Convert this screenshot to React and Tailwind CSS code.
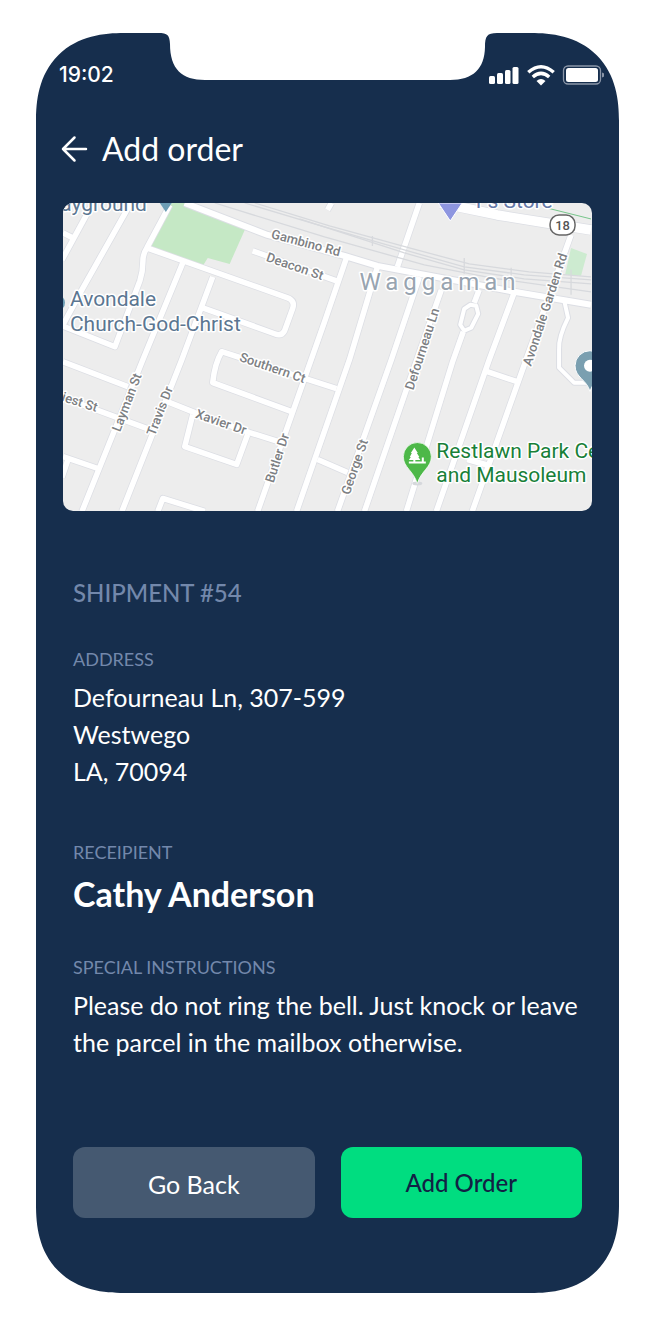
const roads = [
  'M93 203L62 260', 'M63 233L73 238', 'M131 203L83 288L63 325',
  'M170 205L147 248Q143 254 143 262Q143 272 140 281L115 347L62 326',
  'M147 248L288 298Q296 301 293 309L285 331Q282 337 275 334L203 308',
  'M183 263L143 360L82 512', 'M213 277L182 360L122 512',
  'M253 251L337 281', 'M347 258L325 322L258 512', 'M378 267L350 360L297 512',
  'M420 277L392 360L338 512', 'M442 290L407 390L365 512',
  'M480 290L475 303M464 332L453 363L407 512', 'M515 293L490 360L437 512',
  'M572 235L528 357L473 512', 'M488 372L518 382', 'M468 460L490 466',
  'M420 203L398 267', 'M332 203L328 210', 'M63 362L128 387', 'M63 398L150 430',
  'M165 401L195 413L250 433L282 443', 'M193 415L185 447L237 465L248 435',
  'M337 389L222 352Q215 364 213 383L292 412', 'M63 457L98 469', 'M68 460L62 478',
  'M158 512L163 499L205 512', 'M318 460L348 473',
];
const narrowRoads = [
  'M471 305L477 306L479 314L472 328L465 331L461 325L465 309Z',
  'M565 300L569 318Q559 338 560 350L560 368L575 383H592',
];
const rails = [
  'M245 203L325 227L405 250L465 267L525 275L592 280',
  'M255 203L330 226L410 248L470 264L530 272L592 277',
  'M215 203L325 237L425 265L492 278L592 292',
  'M300 219L405 253L465 270L525 279L592 284',
  'M373 236V246M465 258V274M512 268V280M572 270V295',
];

function RoadLabel({ x, y, angle, children }) {
  return (
    <text x={x} y={y} transform={`rotate(${angle} ${x} ${y})`} fontSize="13" fontWeight="500" fill="#7d8083" stroke="#fff" strokeWidth="3" paintOrder="stroke">
      {children}
    </text>
  );
}

function DeliveryMap() {
  return (
    <svg
      role="img"
      aria-label="Map of Waggaman"
      viewBox="63 203 530 309"
      preserveAspectRatio="xMidYMid slice"
      className="block w-full rounded-[10px] bg-[#ededed]"
      fontFamily="Roboto, sans-serif"
      strokeLinejoin="round"
    >
      <path d="M172 203H187L246 228L230 264L208 258L203 266L151 247Z" fill="#c5e8c5" />
      <path d="M572 248L588 254L582 276L566 275Z" fill="#cdebd0" />
      <g fill="none">
        <g stroke="#dcdee4" strokeWidth="7">{roads.map((d) => <path key={d} d={d} />)}</g>
        <g stroke="#dcdee4" strokeWidth="6">{narrowRoads.map((d) => <path key={d} d={d} />)}</g>
        <path d="M185 203L268 235L345 256L378 266L458 281L515 292L592 305" stroke="#dcdee4" strokeWidth="8" />
        <path d="M441 203L465 208L498 215L548 223L592 230" stroke="#dcdee4" strokeWidth="11" />
        <g stroke="#fff" strokeWidth="5.500">{roads.map((d) => <path key={d} d={d} />)}</g>
        <g stroke="#fff" strokeWidth="4">{narrowRoads.map((d) => <path key={d} d={d} />)}</g>
        <path d="M185 203L268 235L345 256L378 266L458 281L515 292L592 305" stroke="#fff" strokeWidth="6" />
        <path d="M441 203L465 208L498 215L548 223L592 230" stroke="#fff" strokeWidth="9.500" />
        <g stroke="#d7d9dd" strokeWidth="1.300">{rails.map((d) => <path key={d} d={d} />)}</g>
        <path d="M548 208L592 219" stroke="#76c58a" />
      </g>

      <RoadLabel x={271} y={238} angle={15}>Gambino Rd</RoadLabel>
      <RoadLabel x={266} y={261} angle={19}>Deacon St</RoadLabel>
      <RoadLabel x={239} y={361} angle={19}>Southern Ct</RoadLabel>
      <RoadLabel x={195} y={418} angle={19}>Xavier Dr</RoadLabel>
      <RoadLabel x={61} y={401} angle={18}>iest St</RoadLabel>
      <RoadLabel x={120} y={433} angle={-69}>Layman St</RoadLabel>
      <RoadLabel x={155} y={437} angle={-69}>Travis Dr</RoadLabel>
      <RoadLabel x={274} y={484} angle={-72}>Butler Dr</RoadLabel>
      <RoadLabel x={350} y={496} angle={-71}>George St</RoadLabel>
      <RoadLabel x={414} y={391} angle={-72}>Defourneau Ln</RoadLabel>
      <RoadLabel x={532} y={367} angle={-72}>Avondale Garden Rd</RoadLabel>

      <g stroke="#fff" strokeWidth="3" paintOrder="stroke">
        <text x="360" y="290" fontSize="24" letterSpacing="5" fill="#98a4b0">Waggaman</text>
        <g fontSize="21" fill="#5b7691">
          <text x="147" y="211" textAnchor="end">Playground</text>
          <text x="70" y="306">Avondale</text>
          <text x="70" y="331">Church-God-Christ</text>
          <text x="473" y="208" fill="#6478a8">T's Store</text>
        </g>
        <g fontSize="21" fill="#188038">
          <text x="437" y="458">Restlawn Park Cemetery</text>
          <text x="437" y="483">and Mausoleum</text>
        </g>
      </g>

      <rect x="551" y="215" width="25" height="20" rx="9" fill="#fff" stroke="#666" strokeWidth="1.5" />
      <text x="563.5" y="230" fontSize="13" fontWeight="500" textAnchor="middle" fill="#555">18</text>

      <path d="M439 203H463L451 221Z" fill="#8e96e0" stroke="#fff" />
      <path d="M160 203H172L166 212Z" fill="#6c9db5" />
      <circle cx="57" cy="303" r="8" fill="#6c9db5" />
      <path d="M591 392C588 380 576 378 576 366A15 15 0 0 1 606 366C606 378 594 380 591 392Z" fill="#7a9fb0" stroke="#fff" />
      <circle cx="591" cy="366" r="6" fill="#fff" />
      <ellipse cx="418" cy="484" rx="5" ry="2" fill="#d6d8dc" />
      <path d="M418 484C414 471 404 468 404 457A14 14 0 0 1 432 457C432 468 422 471 418 484Z" fill="#4db848" stroke="#fff" strokeWidth=".7" />
      <path d="M409.500 462H426.500V464H409.500ZM415 448L418.500 453.500H417.500L420 457.500H419L421 460.500H416V463H414V460.500H409.500L411.500 457.500H410.500L412.500 453.500H411.500ZM422.500 458H424.500V462H422.500Z" fill="#fff" />
    </svg>
  );
}

function StatusIcons() {
  return (
    <svg aria-hidden="true" width="116" height="22" viewBox="488 64 116 22" className="shrink-0">
      <g fill="#fff">
        <rect x="489" y="76" width="6" height="8" rx="1.5" />
        <rect x="497" y="73" width="6" height="11" rx="1.5" />
        <rect x="505" y="70" width="5.5" height="14" rx="1.5" />
        <rect x="512.500" y="67" width="6" height="17" rx="1.500" />
        <rect x="566" y="68" width="32" height="14" rx="2.500" />
      </g>
      <path d="M541 85.500L536.500 81Q541 77.200 545.500 81Z" fill="#fff" />
      <path d="M532.800 77Q541 69.800 549.200 77M528.300 72.300Q541 61.200 553.700 72.300" fill="none" stroke="#fff" strokeWidth="3.500" />
      <rect x="563.500" y="66" width="37" height="18" rx="4.500" fill="none" stroke="#8b96a8" strokeWidth="1.300" />
      <path d="M602 72.500Q604.500 73 604.500 75T602 77.500Z" fill="#8b96a8" />
    </svg>
  );
}

function Field({ label, children }) {
  return (
    <section>
      <h3 className="text-[18px] leading-6 text-[#7388ab]">{label}</h3>
      {children}
    </section>
  );
}

export default function App() {
  return (
    <div className="min-h-screen bg-white pt-[33px] pr-[37px] pb-8 pl-9 font-['Lato',sans-serif]">
      <main className="relative rounded-[88px] bg-[#162e4d] px-[27px] pb-[75px] text-white [corner-shape:superellipse(1.25)]">
        <svg aria-hidden="true" width="340" height="52" viewBox="158 30 340 52" className="absolute -top-[3px] left-1/2 -translate-x-1/2">
          <path d="M158 30V33C168 33 169.500 35.500 170 44C170 69 182 80 205 80H450C473 80 484.500 69 485 47C485 36 487 33 497 33V30Z" fill="#fff" />
        </svg>
        <div className="-mr-3 flex items-center justify-between pt-[30px]">
          <time className="-ml-1 font-['Inter',sans-serif] text-[21px] leading-6 font-medium">19:02</time>
          <StatusIcons />
        </div>
        <header className="mt-[42px] flex items-center gap-[14px]">
          <button type="button" aria-label="Back" className="-ml-0.5">
            <svg aria-hidden="true" width="27" height="28" viewBox="0 0 27 28" fill="none" stroke="#fff" strokeWidth="2.500" strokeLinecap="round" strokeLinejoin="round" className="block">
              <path d="M25 14H2M13.500 2.500L2 14L13.500 25.500" />
            </svg>
          </button>
          <h1 className="text-[32px] leading-10">Add order</h1>
        </header>
        <div className="mt-[34px]">
          <DeliveryMap />
        </div>

        <div className="px-[10px]">
          <h2 className="mt-16 text-[24px] leading-9 font-medium text-[#7388ab]">SHIPMENT #54</h2>
          <div className="mt-9 flex flex-col">
            <Field label="ADDRESS">
              <address className="mt-2 text-[25px] leading-[37px] not-italic">
                Defourneau Ln, 307-599
                <br />
                Westwego
                <br />
                LA, 70094
              </address>
            </Field>
            <div className="mt-[50px]">
              <Field label="RECEIPIENT">
                <p className="mt-2 text-[34px] leading-11 font-bold">Cathy Anderson</p>
              </Field>
            </div>
            <div className="mt-[39px]">
              <Field label="SPECIAL INSTRUCTIONS">
                <p className="mt-2 text-[25px] leading-[37px]">
                  Please do not ring the bell. Just knock or leave the parcel in the mailbox otherwise.
                </p>
              </Field>
            </div>
          </div>
          <div className="mt-[86px] grid grid-cols-2 gap-[26px]">
            <button type="button" className="h-[71px] rounded-xl bg-[#455971] pt-1 text-[25px]">Go Back</button>
            <button type="button" className="h-[71px] rounded-xl bg-[#00dd80] text-[24px] font-medium text-[#122144]">Add Order</button>
          </div>
        </div>
      </main>
    </div>
  );
}
